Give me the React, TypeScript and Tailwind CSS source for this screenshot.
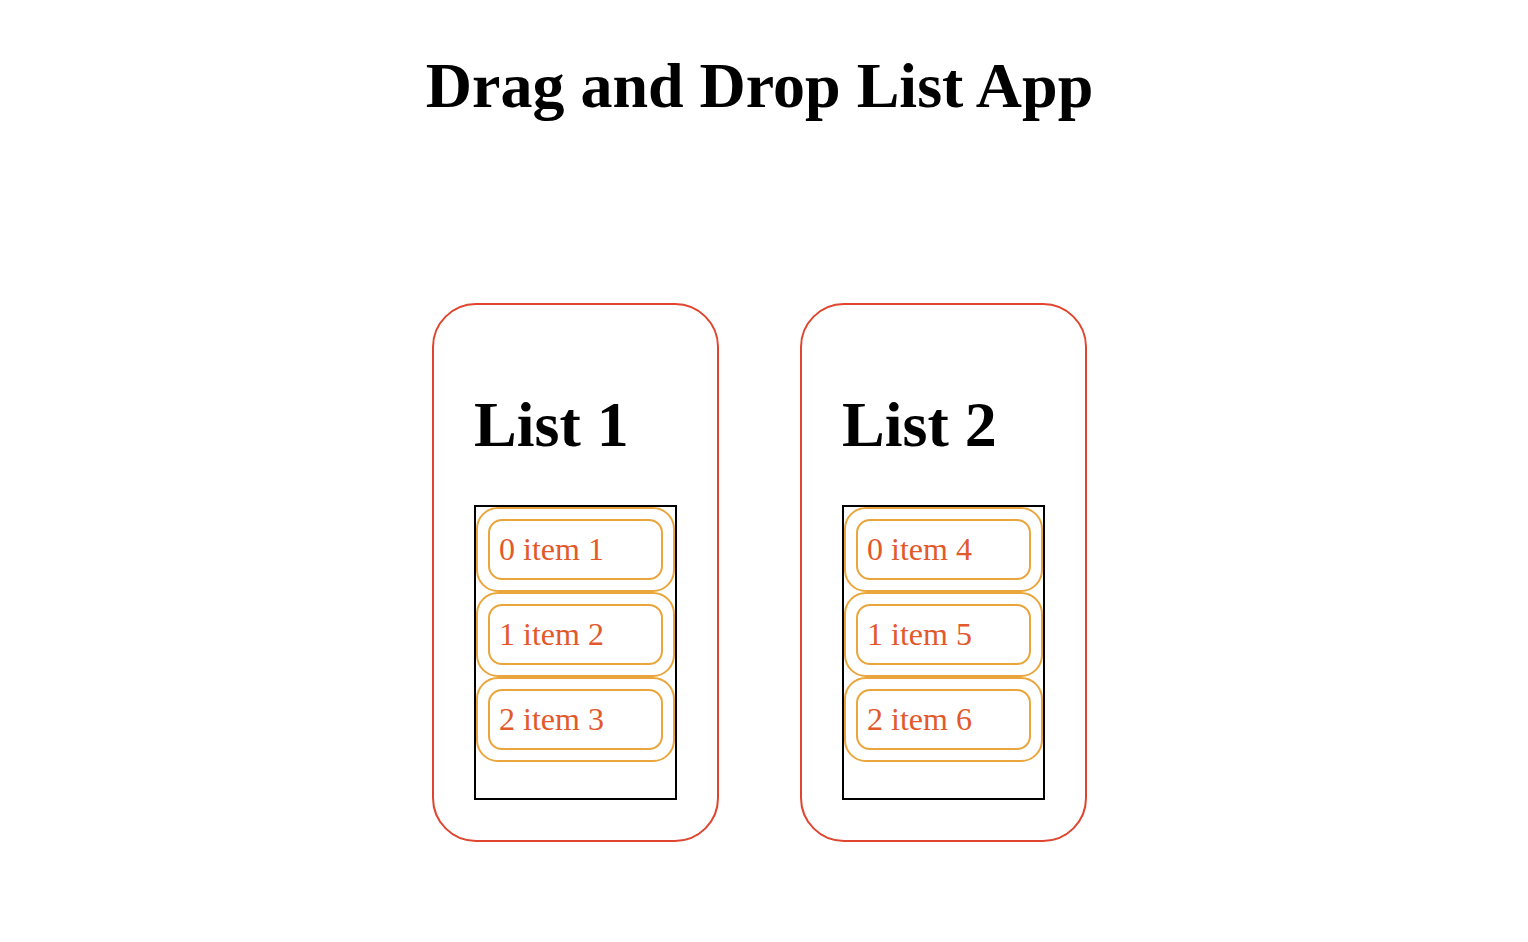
const lists = [
  { title: 'List 1', items: ['item 1', 'item 2', 'item 3'] },
  { title: 'List 2', items: ['item 4', 'item 5', 'item 6'] },
]

export default function App() {
  return (
    <main className="min-h-screen bg-white text-black font-['Liberation_Serif',serif] pr-[9px]">
      <h1 className="pt-[54px] text-center text-[64px] font-bold leading-none">Drag and Drop List App</h1>

      <div className="mt-[185px] flex justify-center gap-[81px]">
        {lists.map((list) => (
          <section
            key={list.title}
            className="w-[287px] rounded-[44px] border-2 border-[#e0452f] px-[40px] pt-[88px] pb-[40px]"
          >
            <h2 className="text-[64px] font-bold leading-none">{list.title}</h2>
            <ul className="mt-[48px] h-[295px] border-2 border-black">
              {list.items.map((item, i) => (
                <li
                  key={item}
                  className="h-[85px] rounded-[22px] border-2 border-[#eaa63c] p-[10px]"
                >
                  <div className="h-full rounded-[14px] border-2 border-[#eaa63c] pl-[9px] text-[32px] leading-[57px] text-[#e2592b]">
                    {i} {item}
                  </div>
                </li>
              ))}
            </ul>
          </section>
        ))}
      </div>
    </main>
  )
}
